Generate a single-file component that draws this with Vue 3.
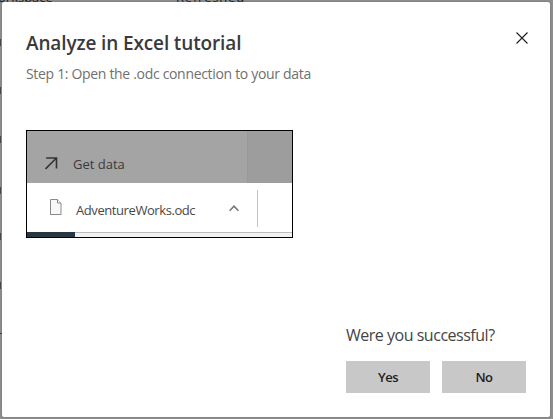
<script setup>
const answers = ['Yes', 'No']
const rowMarks = [39, 87, 136, 187, 233, 282]
</script>

<template>
  <div class="page">
    <span class="column workspace">Workspace</span>
    <span class="column refreshed">Refreshed</span>
    <i v-for="y in rowMarks" :key="y" class="mark" :style="{ top: y + 'px' }"></i>
    <i class="rule"></i>
    <main class="dialog">
      <header class="head">
        <div>
          <h1>Analyze in Excel tutorial</h1>
          <p class="step">Step 1: Open the .odc connection to your data</p>
        </div>
        <svg class="close" width="12" height="12" viewBox="0 0 12 12"><path d="M.5.5l11 11M11.5.5l-11 11" fill="none" stroke="#222" stroke-width="1.15" /></svg>
      </header>
      <section class="preview">
        <div class="get-data">
          <svg class="arrow" width="13" height="13" viewBox="0 0 13 13"><path d="M1.2 1h10.3v10.6M11.2 1.3L.5 12" fill="none" stroke="#333" stroke-width="1.6" /></svg>
          <span class="get-text">Get data</span>
          <div class="side"></div>
        </div>
        <div class="download">
          <svg class="file" width="13" height="17" viewBox="0 0 13 17"><path d="M1.5.5h7l3.5 3.5v11.5H1.5z" fill="#f8f8f8" stroke="#8a8a8a" /><path d="M8.5 .5V4H12" fill="#fff" stroke="#8a8a8a" /></svg>
          <span class="file-name">AdventureWorks.odc</span>
          <svg class="chevron" width="10" height="7" viewBox="0 0 10 7"><path d="M.6 5.8L5 1.2 9.4 5.8" fill="none" stroke="#777" stroke-width="1.6" /></svg>
          <i class="divider"></i>
        </div>
        <div class="strip"><i></i></div>
      </section>
      <footer class="foot">
        <p>Were you successful?</p>
        <div class="actions">
          <button v-for="a in answers" :key="a">{{ a }}</button>
        </div>
      </footer>
    </main>
  </div>
</template>

<style>
body { margin: 0; overflow: hidden; }
</style>

<style scoped>
* { box-sizing: border-box; }
h1, p { margin: 0; white-space: nowrap; }
svg { display: block; flex: none; }
.page { position: relative; width: 553px; height: 419px; padding: 2px 3px 2px 2px; overflow: hidden; background: #8e8e8e; font-family: "Open Sans", "Noto Sans", sans-serif; }
.column { position: absolute; top: -12px; font-size: 13px; line-height: 18px; color: #111; }
.workspace { left: -14px; }
.refreshed { left: 176px; letter-spacing: 0.8px; }
.mark { position: absolute; left: 0; width: 1px; height: 7px; background: #444; }
.rule { position: absolute; left: 0; top: 333px; width: 2px; height: 1px; background: #333; }
.dialog { position: relative; display: flex; flex-direction: column; width: 548px; height: 415px; padding: 29px 24px 24px; border-radius: 2px; background: #fff; box-shadow: 0 0 2px #707070; }
.head { display: flex; justify-content: space-between; height: 99px; }
h1 { font-size: 19px; line-height: 24px; font-weight: 600; letter-spacing: -0.13px; color: #3a3a3a; }
.step { margin-top: 9px; font-size: 14px; line-height: 20px; letter-spacing: -0.32px; color: #707070; }
.close { margin: 1px -2px 0 0; }
.preview { display: flex; flex-direction: column; width: 267px; height: 108px; border: 1px solid #000; background: #fff; }
.get-data { display: flex; align-items: flex-start; height: 52px; padding-left: 18px; background: #a5a4a4; }
.arrow { margin-top: 26px; }
.get-text { margin: 23px 0 0 15px; font-size: 13px; line-height: 20px; color: #3a3a3a; }
.side { width: 45px; height: 52px; margin-left: auto; border-left: 1px solid #989898; background: #9d9d9d; }
.download { display: flex; align-items: flex-start; height: 49px; padding-left: 22px; }
.file { margin-top: 16px; }
.file-name { width: 120px; margin: 17px 0 0 14px; font-size: 13px; line-height: 20px; letter-spacing: -0.42px; color: #484848; }
.chevron { margin: 22px 0 0 33px; }
.divider { width: 1px; height: 37px; margin: 7px 0 0 18px; background: #c3c3c3; }
.strip { height: 5px; border-top: 1px solid #bbb; background: #f1f1f1; }
.strip i { display: block; width: 48px; height: 5px; margin-top: -1px; background: #263943; }
.foot { width: 180px; margin: auto 0 0 auto; }
.foot p { font-size: 16px; line-height: 22px; letter-spacing: -0.48px; color: #444; }
.actions { display: flex; gap: 12px; margin-top: 15px; }
button { width: 84px; height: 32px; padding: 0; border: 0; border-radius: 0; background: #c8c8c8; color: #1c1c1c; font: 600 13px/32px "Open Sans", sans-serif; letter-spacing: -0.5px; }
</style>
